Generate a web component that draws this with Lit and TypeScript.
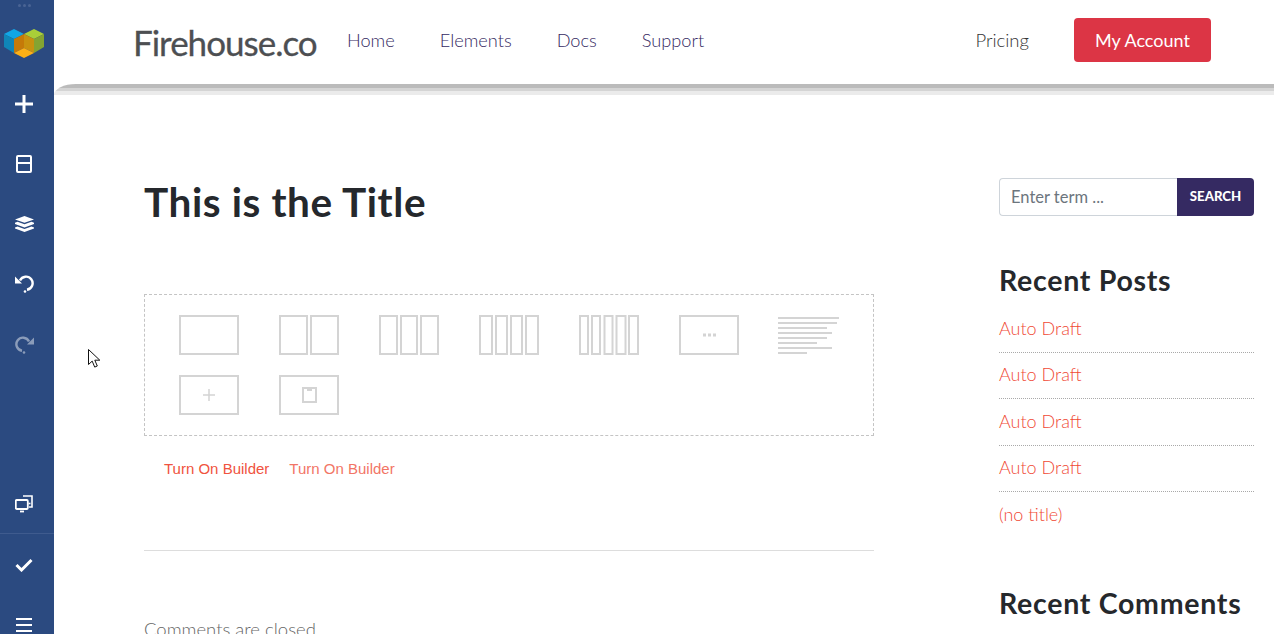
import { LitElement, html, css } from "lit";
import { customElement } from "lit/decorators.js";

@customElement("app-root")
export class AppRoot extends LitElement {
  static styles = css`
    :host { display: block; width: 1274px; height: 634px; overflow: hidden; position: relative; background: #fff; font-family: "Lato", sans-serif; }
    .page { display: grid; grid-template-columns: 54px 1fr; height: 634px; }
    .rail { background: #2b4a80; display: flex; flex-direction: column; height: 634px; overflow: hidden; color: #fff; }
    .dots { height: 11px; flex: none; display: flex; justify-content: center; align-items: center; gap: 2px; padding-right: 6px; }
    .dots i { width: 3px; height: 3px; border-radius: 50%; background: #4a6494; }
    .logo { height: 60px; flex: none; display: flex; align-items: center; justify-content: center; padding: 4px 6px 0 0; box-sizing: border-box; }
    .ri { height: 60px; flex: none; display: flex; align-items: center; justify-content: center; padding-right: 6px; box-sizing: border-box; }
    .ri.plus { margin-top: 3px; }
    .ri.hist { padding-bottom: 2px; }
    .ri.dim { opacity: .45; }
    .ri.last { margin-top: auto; height: 60px; border-bottom: 1px solid #3f5b8e; }
    .ri.check { height: 61px; }
    .ri.bars { height: 60px; margin-bottom: -21px; }
    .main { min-width: 0; display: flex; flex-direction: column; }
    .head { height: 84px; flex: none; display: flex; align-items: center; padding: 0 63px 4px 79px; box-sizing: border-box; }
    .brand { font-size: 35px; letter-spacing: -1px; color: #4d4f52; width: 214px; padding-top: 4px; -webkit-text-stroke: .3px #4d4f52; }
    .nav { display: flex; gap: 45px; font-weight: 300; font-size: 18.2px; color: #352a62; }
    .right { margin-left: auto; display: flex; align-items: center; gap: 45px; font-weight: 300; font-size: 18.5px; color: #333; }
    .btn { width: 137px; height: 44px; background: #dc3545; color: #fff; border-radius: 4px; display: flex; align-items: center; justify-content: center; font-weight: 400; font-size: 18px; }
    .shadow { height: 11px; flex: none; background: linear-gradient(#bbb 0 4px, #d4d4d4 4px 7px, #ebebeb 7px 11px); border-top-left-radius: 22px 11px; }
    .body { flex: 1; display: grid; grid-template-columns: 730px 255px; column-gap: 125px; padding-left: 90px; min-height: 0; }
    h1 { margin: 82px 0 0; font-size: 40.5px; line-height: 50px; font-weight: 700; color: #25282c; letter-spacing: .6px; }
    .builder { margin-top: 67px; height: 142px; box-sizing: border-box; border: 1px dashed #c4c4c4; padding: 20px 34px; display: flex; flex-wrap: wrap; gap: 20px 40px; align-content: flex-start; }
    .tile { width: 60px; height: 40px; display: block; overflow: visible; fill: none; stroke: #d4d4d4; stroke-width: 2; }
    .tile.lines { fill: #d4d4d4; stroke: none; }
    .links { display: flex; gap: 20px; padding: 24px 0 0 20px; font-family: "Liberation Sans", sans-serif; font-size: 15px; line-height: 18px; color: #f05340; }
    .links span + span { opacity: .8; }
    hr { margin: 72px 0 0; border: 0; border-top: 1px solid #ddd; }
    .closed { margin-top: 67px; font-size: 18.5px; font-weight: 300; color: #666; line-height: 22px; }
    .search { margin-top: 83px; height: 38px; display: flex; }
    .input { flex: 1; border: 1px solid #ced4da; border-right: 0; border-radius: 4px 0 0 4px; padding: 0 0 0 11px; display: flex; align-items: center; font-size: 16.5px; color: #6c757d; }
    .go { width: 77px; background: #352a62; color: #fff; border-radius: 0 4px 4px 0; font-size: 13.2px; font-weight: 900; display: flex; align-items: center; justify-content: center; padding-bottom: 2px; box-sizing: border-box; }
    h2 { margin: 46px 0 0; font-size: 28.5px; line-height: 36px; font-weight: 700; color: #25282c; letter-spacing: .72px; }
    ul { list-style: none; margin: 8px 0 0; padding: 0; }
    li { height: 46.5px; box-sizing: border-box; border-bottom: 1px dotted #a9a9a9; padding-bottom: 2px; display: flex; align-items: center; font-size: 18px; font-weight: 300; color: #f04a36; }
    li:last-child { border: 0; }
    h2.second { margin-top: 46px; }
    .cursor { position: absolute; left: 88px; top: 349px; }
  `;

  render() {
    return html`
      <div class="page">
        <nav class="rail">
          <div class="dots"><i></i><i></i><i></i></div>
          <div class="logo">
            <svg width="40" height="30" viewBox="0 0 40 30">
              <polygon points="0,6 10,1 20,6 10,11" fill="#11a6e6"/>
              <polygon points="0,6 10,11 10,25 0,19" fill="#0f86b8"/>
              <polygon points="10,11 20,6 20,20 10,25" fill="#c57a08"/>
              <polygon points="20,6 30,1 40,6 30,11" fill="#a9cf38"/>
              <polygon points="40,6 40,19 30,25 30,11" fill="#84a431"/>
              <polygon points="20,6 30,11 30,25 20,20" fill="#c8920f"/>
              <polygon points="10,25 20,20 30,25 20,30" fill="#fdb016"/>
            </svg>
          </div>
          <div class="ri plus"><svg width="18" height="18" viewBox="0 0 18 18"><path d="M9 0v18M0 9h18" stroke="#fff" stroke-width="3"/></svg></div>
          <div class="ri"><svg width="16" height="18" viewBox="0 0 16 18" fill="none" stroke="#fff" stroke-width="2"><rect x="1" y="1" width="14" height="16" rx="1"/><path d="M1 8h14"/></svg></div>
          <div class="ri"><svg width="19" height="16" viewBox="0 0 19 16" fill="#fff"><path d="M9.500 0 19 3.400 9.500 6.800 0 3.400z"/><path d="M2.500 5.800 9.500 8.300 16.500 5.800 19 6.800 19 8 9.500 11.400 0 8 0 6.800z"/><path d="M2.500 10.400 9.500 12.900 16.500 10.400 19 11.400 19 12.600 9.500 16 0 12.600 0 11.400z"/></svg></div>
          <div class="ri hist"><svg width="19" height="19" viewBox="0 0 19 19" fill="none"><path d="M5 6.500A6.600 6.600 0 1 1 12 15.800" stroke="#fff" stroke-width="2.400"/><path d="M0 3v7h7z" fill="#fff" transform="translate(0 -.5)"/><circle cx="10" cy="17.500" r="1.300" fill="#fff"/></svg></div>
          <div class="ri dim"><svg width="19" height="19" viewBox="0 0 19 19" fill="none"><path d="M14 6.500A6.600 6.600 0 1 0 7 15.800" stroke="#fff" stroke-width="2.400"/><path d="M19 3v7h-7z" fill="#fff" transform="translate(0 -.5)"/><circle cx="9" cy="17.500" r="1.300" fill="#fff"/></svg></div>
          <div class="ri last"><svg width="18" height="18" viewBox="0 0 18 18" fill="none" stroke="#fff" stroke-width="1.600"><path d="M8 1h9v11h-3"/><path d="M13.500 8.500h2"/><rect x=".8" y="5" width="12" height="9" rx="1" stroke-width="1.800" fill="#2b4a80"/><path d="M5 16.500h4" stroke-width="1.800"/></svg></div>
          <div class="ri check"><svg width="18" height="14" viewBox="0 0 18 14" fill="none"><path d="M1.500 7 6.500 12 16.500 2" stroke="#fff" stroke-width="3"/></svg></div>
          <div class="ri bars"><svg width="16" height="14" viewBox="0 0 16 14"><path d="M0 1h16M0 7h16M0 13h16" stroke="#fff" stroke-width="2"/></svg></div>
        </nav>
        <div class="main">
          <header class="head">
            <div class="brand">Firehouse.co</div>
            <div class="nav"><span>Home</span><span>Elements</span><span>Docs</span><span>Support</span></div>
            <div class="right"><span>Pricing</span><span class="btn">My Account</span></div>
          </header>
          <div class="shadow"></div>
          <div class="body">
            <article>
              <h1>This is the Title</h1>
              <div class="builder">
                <svg class="tile" viewBox="0 0 60 40"><rect x="1" y="1" width="58" height="38"/></svg>
                <svg class="tile" viewBox="0 0 60 40"><rect x="1" y="1" width="27" height="38"/><rect x="32" y="1" width="27" height="38"/></svg>
                <svg class="tile" viewBox="0 0 60 40"><rect x="1" y="1" width="17" height="38"/><rect x="22" y="1" width="16" height="38"/><rect x="42" y="1" width="17" height="38"/></svg>
                <svg class="tile" viewBox="0 0 60 40"><rect x="1" y="1" width="12" height="38"/><rect x="17" y="1" width="11" height="38"/><rect x="32" y="1" width="11" height="38"/><rect x="47" y="1" width="12" height="38"/></svg>
                <svg class="tile" viewBox="0 0 60 40"><rect x="1" y="1" width="8" height="38"/><rect x="13" y="1" width="8" height="38"/><rect x="25.500" y="1" width="8" height="38"/><rect x="37.500" y="1" width="9" height="38"/><rect x="50" y="1" width="9" height="38"/></svg>
                <svg class="tile" viewBox="0 0 60 40"><rect x="1" y="1" width="58" height="38"/><path d="M24 20h13" stroke-width="3" stroke-dasharray="3 2"/></svg>
                <svg class="tile lines" viewBox="0 0 60 40"><rect x="-1" y="2" width="61" height="2"/><rect x="-1" y="7" width="59" height="2"/><rect x="-1" y="12" width="49" height="2"/><rect x="-1" y="17" width="54" height="2"/><rect x="-1" y="22" width="49" height="2"/><rect x="-1" y="27" width="39" height="2"/><rect x="-1" y="32" width="54" height="2"/><rect x="-1" y="37" width="29" height="2"/></svg>
                <svg class="tile" viewBox="0 0 60 40"><rect x="1" y="1" width="58" height="38"/><path d="M24 20h12M30 14v12" stroke-width="1.500"/></svg>
                <svg class="tile" viewBox="0 0 60 40"><rect x="1" y="1" width="58" height="38"/><rect x="24" y="13" width="13" height="14"/><path d="M28 15h5"/></svg>
              </div>
              <div class="links"><span>Turn On Builder</span><span>Turn On Builder</span></div>
              <hr />
              <div class="closed">Comments are closed.</div>
            </article>
            <aside>
              <div class="search"><div class="input">Enter term ...</div><div class="go">SEARCH</div></div>
              <h2>Recent Posts</h2>
              <ul>
                <li>Auto Draft</li><li>Auto Draft</li><li>Auto Draft</li><li>Auto Draft</li><li>(no title)</li>
              </ul>
              <h2 class="second">Recent Comments</h2>
            </aside>
          </div>
        </div>
      </div>
      <svg class="cursor" width="14" height="20" viewBox="0 0 14 20"><path d="M.5.500v15l3.700-3.400 2.500 6 2.600-1.100-2.500-5.800h5z" fill="#fff" stroke="#111" stroke-width="1"/></svg>
    `;
  }
}
